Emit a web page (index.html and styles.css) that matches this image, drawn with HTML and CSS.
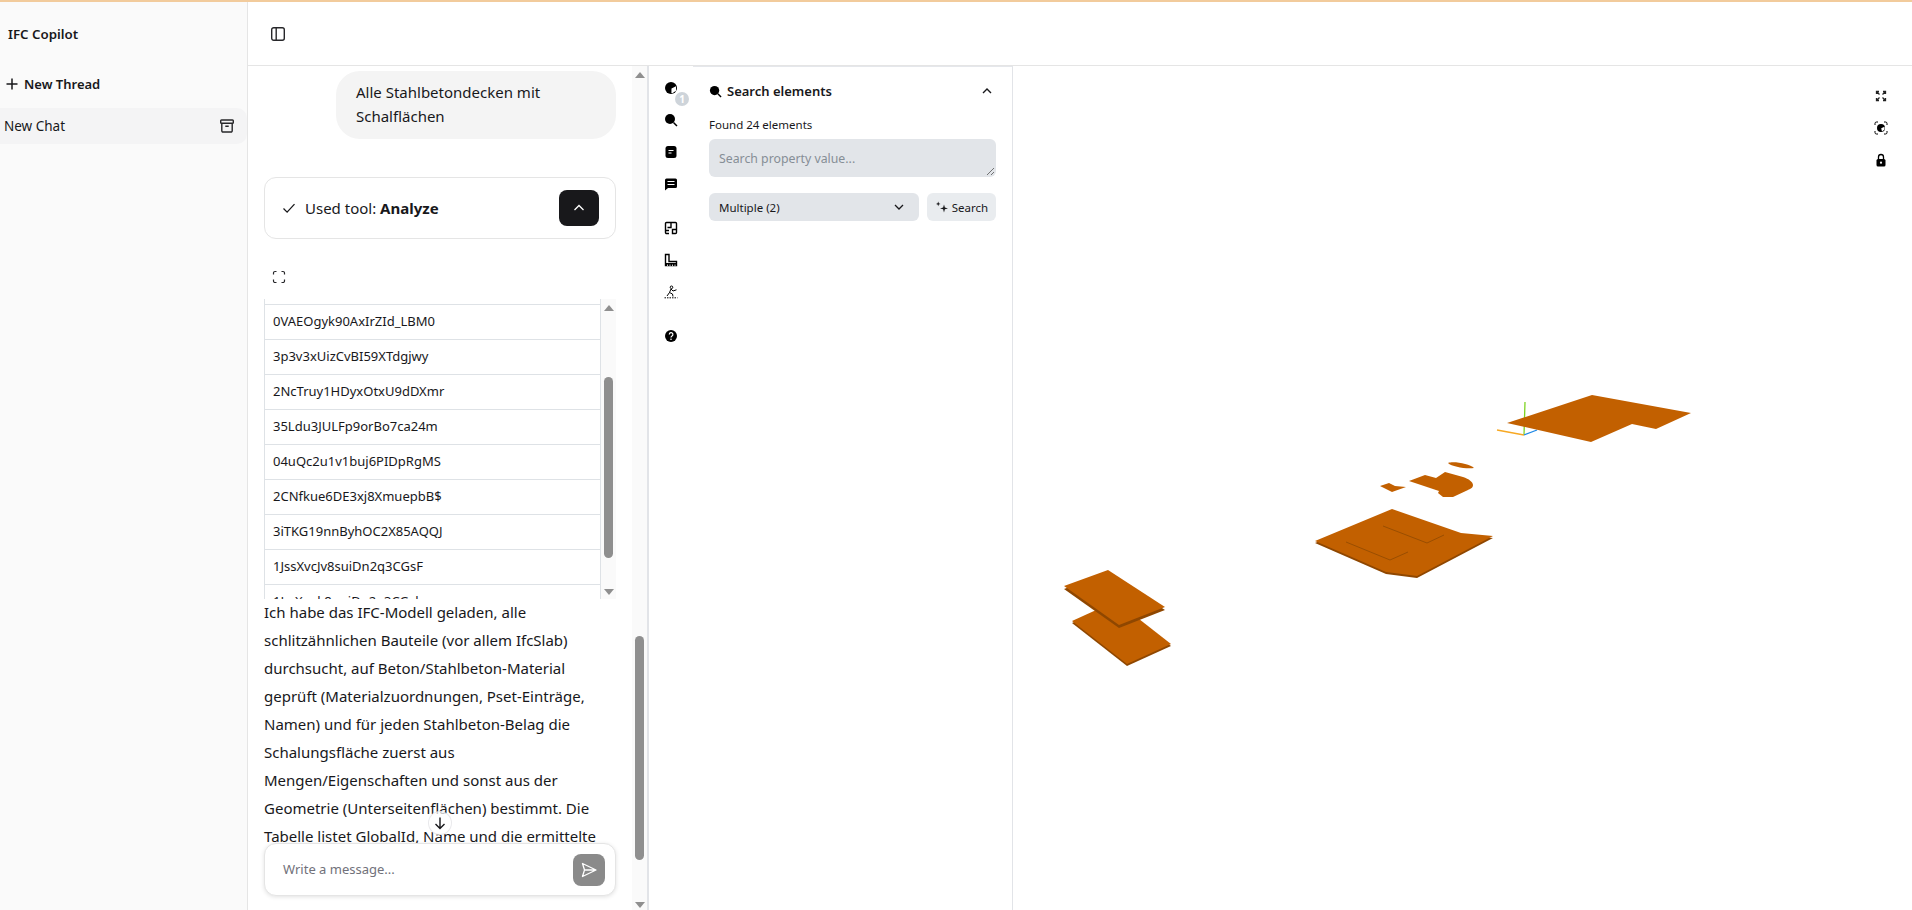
FILE: index.html
```html
<!DOCTYPE html>
<html lang="de">
<head>
<meta charset="utf-8">
<title>IFC Copilot</title>
<link rel="stylesheet" href="styles.css">
</head>
<body>
<div class="accent"></div>
<div class="app">
  <aside class="sidebar">
    <div class="brand">IFC Copilot</div>
    <div class="new-thread">
      <svg class="ico14" viewBox="0 0 14 14"><path d="M7 1.500v11M1.500 7h11" fill="none" stroke="#18181b" stroke-width="1.500"/></svg>
      <span>New Thread</span>
    </div>
    <div class="thread">
      <span>New Chat</span>
      <svg class="ico16" viewBox="0 0 16 16" fill="none" stroke="#27272a" stroke-width="1.400"><rect x="1.700" y="2" width="12.600" height="3.200" rx=".8"/><path d="M2.800 5.200v7.600a1.200 1.200 0 0 0 1.200 1.200h8a1.200 1.200 0 0 0 1.200-1.200V5.200M6.300 8.200h3.400"/></svg>
    </div>
  </aside>
  <div class="main">
    <header class="topbar">
      <svg class="ico16" viewBox="0 0 16 16" fill="none" stroke="#27272a" stroke-width="1.400"><rect x="1.700" y="1.700" width="12.600" height="12.600" rx="2"/><path d="M6.200 1.700v12.600"/></svg>
    </header>
    <div class="workspace">
      <section class="chat">
        <div class="chat-body">
          <div class="messages">
            <div class="bubble">Alle Stahlbetondecken mit Schalflächen</div>
            <div class="tool-card">
              <svg class="check" viewBox="0 0 14 14"><path d="M1.500 7.500l3.600 3.600 7.400-8" fill="none" stroke="#18181b" stroke-width="1.300"/></svg>
              <span class="tool-label">Used tool: <b>Analyze</b></span>
              <span class="tool-btn"><svg viewBox="0 0 12 12" width="12" height="12"><path d="M1.500 8L6 3.500 10.500 8" fill="none" stroke="#fff" stroke-width="1.300"/></svg></span>
            </div>
            <div class="table-tools">
              <svg viewBox="0 0 14 14" width="14" height="14" fill="none" stroke="#27272a" stroke-width="1.200"><path d="M1.500 4.500V3A1.500 1.500 0 0 1 3 1.500h1.500M9.500 1.500H11A1.500 1.500 0 0 1 12.500 3v1.500M12.500 9.500V11a1.500 1.500 0 0 1-1.500 1.500H9.500M4.500 12.500H3A1.500 1.500 0 0 1 1.500 11V9.500"/></svg>
            </div>
            <div class="table-wrap">
              <div class="table">
                <div class="row sliver"></div>
                <div class="row">0VAEOgyk90AxIrZId_LBM0</div>
                <div class="row">3p3v3xUizCvBI59XTdgjwy</div>
                <div class="row">2NcTruy1HDyxOtxU9dDXmr</div>
                <div class="row">35Ldu3JULFp9orBo7ca24m</div>
                <div class="row">04uQc2u1v1buj6PIDpRgMS</div>
                <div class="row">2CNfkue6DE3xj8XmuepbB$</div>
                <div class="row">3iTKG19nnByhOC2X85AQQJ</div>
                <div class="row">1JssXvcJv8suiDn2q3CGsF</div>
                <div class="row">1LoXxqk8uuiDn2q3CGsl</div>
              </div>
              <div class="sb sb-inner">
                <i class="arrow up"></i>
                <i class="thumb thumb-inner"></i>
                <i class="spring"></i>
                <i class="arrow down"></i>
              </div>
            </div>
            <p class="answer">Ich habe das IFC-Modell geladen, alle schlitzähnlichen Bauteile (vor allem IfcSlab) durchsucht, auf Beton/Stahlbeton-Material geprüft (Materialzuordnungen, Pset-Einträge, Namen) und für jeden Stahlbeton-Belag die Schalungsfläche zuerst aus Mengen/Eigenschaften und sonst aus der Geometrie (Unterseitenflächen) bestimmt. Die Tabelle listet GlobalId, Name und die ermittelte Schalungsfläche.</p>
            <span class="to-bottom"><svg viewBox="0 0 14 14" width="14" height="14"><path d="M7 1.500v11M2.500 8L7 12.500 11.500 8" fill="none" stroke="#18181b" stroke-width="1.400"/></svg></span>
          </div>
          <div class="composer">
            <span class="placeholder">Write a message...</span>
            <span class="send"><svg viewBox="0 0 18 18" width="18" height="18"><path d="M2.500 2.500L16 9 2.500 15.500 4.500 9zM4.500 9H16" fill="none" stroke="#fff" stroke-width="1.300" stroke-linejoin="round"/></svg></span>
          </div>
        </div>
        <div class="sb sb-outer">
          <i class="arrow up"></i>
          <i class="thumb thumb-outer"></i>
          <i class="spring"></i>
          <i class="arrow down"></i>
        </div>
      </section>

      <nav class="rail">
        <div class="rail-group">
          <span class="rail-item">
            <svg viewBox="0 0 14 14" width="14" height="14"><circle cx="7" cy="7" r="6" fill="#000"/><path d="M7.500 7.500l4.500-2.300v4.500l-3.600 2.600-1-.2z" fill="#fff"/></svg>
            <span class="badge">1</span>
          </span>
          <span class="rail-item"><svg viewBox="0 0 14 14" width="14" height="14"><circle cx="6" cy="6" r="5" fill="#000"/><path d="M9.500 9.500l3.500 3.500" stroke="#000" stroke-width="1.500"/></svg></span>
          <span class="rail-item"><svg viewBox="0 0 14 14" width="14" height="14"><rect x="1.500" y="1" width="11" height="12" rx="2.500" fill="#000"/><path d="M4.500 5.500h5M4.500 8h3" stroke="#fff" stroke-width="1.200"/></svg></span>
          <span class="rail-item"><svg viewBox="0 0 14 14" width="14" height="14"><path d="M2.500 1.500h9a1.500 1.500 0 0 1 1.500 1.500v6.500A1.500 1.500 0 0 1 11.500 11H4l-3 2.500V3a1.500 1.500 0 0 1 1.500-1.500z" fill="#000"/><path d="M3.500 4.500h7M3.500 7.500h7" stroke="#fff" stroke-width="1.200"/></svg></span>
        </div>
        <div class="rail-group">
          <span class="rail-item"><svg viewBox="0 0 14 14" width="14" height="14" fill="none" stroke="#000" stroke-width="1.400"><path d="M5 12.500H2.500a1 1 0 0 1-1-1v-9a1 1 0 0 1 1-1h9a1 1 0 0 1 1 1v9a1 1 0 0 1-1 1H8.500V8.500h4M7 1.500v5H3.500M1.500 9.500H5"/></svg></span>
          <span class="rail-item"><svg viewBox="0 0 14 14" width="14" height="14"><path d="M1.500 1.500h3.500v7h7.500v4h-11z" fill="none" stroke="#000" stroke-width="1.400"/><path d="M1 10h12v3H1z" fill="#000"/><path d="M3.500 13v-1.500M6 13v-1.500M8.500 13v-1.500M11 13v-1.500" stroke="#fff" stroke-width=".8"/></svg></span>
          <span class="rail-item"><svg viewBox="0 0 14 14" width="14" height="14" fill="none" stroke="#000" stroke-width="1"><circle cx="7.500" cy="2.300" r="1.300"/><path d="M7 4L5.500 7.500l3 1.500L9 11.500M7 4l2 2 3.500-1.200M5.500 7.500L3 11"/><path d="M.5 12.800h13" stroke-dasharray="1.500 1"/></svg></span>
        </div>
        <div class="rail-group">
          <span class="rail-item"><svg viewBox="0 0 14 14" width="14" height="14"><circle cx="7" cy="7" r="6" fill="#000"/><path d="M5.300 5.500a1.800 1.800 0 1 1 2.700 1.500c-.6.400-1 .7-1 1.500" fill="none" stroke="#fff" stroke-width="1.200"/><circle cx="7" cy="10.300" r=".8" fill="#fff"/></svg></span>
        </div>
      </nav>

      <section class="panel">
        <div class="panel-head">
          <svg viewBox="0 0 14 14" width="13" height="13"><circle cx="6" cy="6" r="5" fill="#000"/><path d="M9.500 9.500l3.500 3.500" stroke="#000" stroke-width="1.500"/></svg>
          <span class="panel-title">Search elements</span>
          <svg class="panel-chev" viewBox="0 0 12 12" width="12" height="12"><path d="M2 8l4-4 4 4" fill="none" stroke="#18181b" stroke-width="1.400"/></svg>
        </div>
        <div class="found">Found 24 elements</div>
        <div class="textarea">Search property value...
          <svg class="grip" viewBox="0 0 8 8" width="8" height="8"><path d="M1 8l7-7M5 8l3-3" stroke="#555" stroke-width=".8"/></svg>
        </div>
        <div class="controls">
          <div class="select"><span>Multiple (2)</span><svg viewBox="0 0 12 12" width="12" height="12"><path d="M2 4l4 4 4-4" fill="none" stroke="#18181b" stroke-width="1.300"/></svg></div>
          <div class="search-btn">
            <svg viewBox="0 0 14 14" width="14" height="14"><path d="M9 4.500l.9 3 3.100.9-3.100.9-.9 3.200-.9-3.200-3.100-.9 3.100-.9zM3.200 1.500l.6 1.800 1.700.6-1.700.6-.6 1.800-.6-1.800L1 3.900l1.600-.6z" fill="#18181b"/></svg>
            <span>Search</span>
          </div>
        </div>
      </section>

      <section class="viewer">
        <svg class="scene" viewBox="1013 66 899 844" width="899" height="844">
          <g class="axes" fill="none" stroke-width="1.300">
            <path d="M1524 435L1525 402" stroke="#7ed321"/>
            <path d="M1524 435L1497 430" stroke="#f7a823"/>
            <path d="M1524 435L1537 430" stroke="#1e88e5"/>
          </g>
          <path class="edge" d="M1072 623L1116 603L1171 646L1127 666Z"/>
          <path class="slab" d="M1072 621L1116 601L1171 644L1127 664Z"/>
          <path class="edge" d="M1064 589L1108 573L1165 610L1119 628Z"/>
          <path class="slab" d="M1064 586L1108 570L1165 607L1119 625Z"/>
          <path class="edge" d="M1315 543L1392 511L1461 535L1493 538L1417 578L1386 574Z"/>
          <path class="slab" d="M1315 541L1392 509L1461 533L1493 536L1417 576L1386 572Z"/>
          <path class="slab" d="M1507 423L1592 395L1691 413L1656 429L1632 424L1591 442Z"/>
          <path class="slab" d="M1448 463c6-2 22 1 26 5-8 1-22-1-26-5z"/>
          <path class="slab" d="M1409 481l16-6 11 3 9-6 18 5c6 2 10 5 10 8s-3 4-5 5l-15 7h-10l-5-4 1-2z"/>
          <path class="slab" d="M1380 486l9-3 6 3 11 1-14 5z"/>
          <path class="seam" d="M1383 526l44 17 17-8"/>
          <path class="seam" d="M1346 542l44 18 18-8"/>
        </svg>
        <div class="viewer-tools">
          <svg viewBox="0 0 14 14" width="14" height="14" fill="none" stroke="#222" stroke-width="1.300"><path d="M5.500 5.500L2.500 2.500M2.500 5V2.500H5M8.500 5.500L11.500 2.500M9 2.500h2.500V5M5.500 8.500L2.500 11.500M2.500 9v2.500H5M8.500 8.500L11.500 11.500M11.500 9v2.500H9"/></svg>
          <svg viewBox="0 0 14 14" width="14" height="14"><path d="M1 4V2.500A1.500 1.500 0 0 1 2.500 1H4M10 1h1.500A1.500 1.500 0 0 1 13 2.500V4M13 10v1.500a1.500 1.500 0 0 1-1.500 1.500H10M4 13H2.500A1.500 1.500 0 0 1 1 11.500V10" fill="none" stroke="#000" stroke-width="1"/><circle cx="7" cy="7" r="4" fill="#000"/><path d="M7.200 7.200l3.300-1.500v2.800L8 10.500z" fill="#fff"/></svg>
          <svg viewBox="0 0 14 14" width="14" height="14"><rect x="2.500" y="6" width="9" height="7.500" rx="1.500" fill="#000"/><path d="M4.500 6V4a2.500 2.500 0 0 1 5 0v2" fill="none" stroke="#000" stroke-width="1.300"/><circle cx="7" cy="9.700" r="1.100" fill="#fff"/></svg>
        </div>
      </section>
    </div>
  </div>
</div>
</body>
</html>
```

FILE: styles.css
```css
* { box-sizing: border-box; }
html, body { margin: 0; height: 100%; overflow: hidden; }
body {
  font-family: "Noto Sans", "Open Sans", sans-serif;
  color: #18181b;
  background: #fff;
  display: flex;
  flex-direction: column;
  height: 910px;
}
.accent { height: 2px; background: #f2cb9c; flex: none; }
.app { flex: 1; display: flex; min-height: 0; }

/* sidebar */
.sidebar {
  width: 248px;
  flex: none;
  background: #fafafa;
  border-right: 1px solid #e5e5e5;
}
.brand { height: 64px; padding: 0 0 0 8px; display: flex; align-items: center; font-size: 13.3px; font-weight: 600; }
.new-thread { margin-top: 1px; height: 34px; padding-left: 5px; display: flex; align-items: center; gap: 5px; font-size: 13px; font-weight: 600; }
.thread {
  margin-top: 7px;
  height: 36px;
  padding: 0 12px 0 4px;
  background: #f4f4f5;
  border-radius: 0 10px 10px 0;
  display: flex;
  align-items: center;
  justify-content: space-between;
  font-size: 13.500px;
}
.ico14 { width: 14px; height: 14px; flex: none; }
.ico16 { width: 16px; height: 16px; flex: none; }

/* main */
.main { flex: 1; min-width: 0; display: flex; flex-direction: column; }
.topbar {
  height: 64px;
  flex: none;
  padding-left: 22px;
  display: flex;
  align-items: center;
  border-bottom: 1px solid #e5e5e5;
}
.workspace { flex: 1; min-height: 0; display: flex; }

/* chat */
.chat { width: 399px; flex: none; display: flex; min-height: 0; }
.chat-body { width: 384px; flex: none; display: flex; flex-direction: column; padding-bottom: 14px; }
.messages { position: relative; flex: 1; min-height: 0; overflow: hidden; padding: 5px 16px 0; }
.bubble {
  width: 280px;
  margin-left: auto;
  padding: 9px 20px 11px;
  background: #f4f4f4;
  border-radius: 24px;
  font-size: 15px;
  line-height: 24px;
  min-height: 68px;
}
.tool-card {
  margin-top: 38px;
  height: 62px;
  border: 1px solid #e5e5e5;
  border-radius: 12px;
  display: flex;
  align-items: center;
  padding: 0 16px 0 17px;
  font-size: 15px;
}
.check { width: 14px; height: 14px; flex: none; margin-right: 9px; }
.tool-label { flex: 1; }
.tool-btn {
  width: 40px;
  height: 36px;
  background: #18181b;
  border-radius: 8px;
  display: flex;
  align-items: center;
  justify-content: center;
}
.table-tools { height: 60px; padding: 31px 0 0 8px; }
.table-tools svg { display: block; }
.table-wrap { height: 300px; display: flex; overflow: hidden; }
.table { flex: 1; min-width: 0; border-left: 1px solid #dee2e6; border-right: 1px solid #dee2e6; }
.row {
  height: 35px;
  padding: 0 0 2px 8px;
  border-bottom: 1px solid #dee2e6;
  display: flex;
  align-items: center;
  font-size: 13px;
  white-space: nowrap;
}
.row.sliver { height: 6px; padding: 0; }

/* faux classic scrollbars */
.sb { display: flex; flex-direction: column; align-items: center; flex: none; background: #fafafa; }
.sb i { display: block; flex: none; }
.spring { flex: 1 !important; }
.arrow { width: 0; height: 0; border-left: 5px solid transparent; border-right: 5px solid transparent; }
.arrow.up { border-bottom: 6px solid #8f8f8f; }
.arrow.down { border-top: 6px solid #8f8f8f; }
.thumb { width: 9px; border-radius: 5px; background: #8f8f8f; }
.sb-inner { width: 15px; padding: 6px 0 4px; }
.thumb-inner { height: 181px; margin-top: 66px; }
.sb-outer { width: 15px; padding: 6px 0 2px; }
.thumb-outer { height: 224px; margin-top: 558px; }

.answer { margin: -1px 0 0; font-size: 15px; line-height: 28px; }
.to-bottom {
  position: absolute;
  left: 180px;
  bottom: 8px;
  width: 24px;
  height: 24px;
  border-radius: 50%;
  border: 1px solid rgba(228, 228, 231, .8);
  background: rgba(255, 255, 255, .75);
  display: flex;
  align-items: center;
  justify-content: center;
}
.composer {
  flex: none;
  margin: 0 16px;
  height: 53px;
  border: 1px solid #e5e5e5;
  border-radius: 12px;
  box-shadow: 0 1px 4px rgba(0, 0, 0, .12);
  background: #fff;
  display: flex;
  align-items: center;
  justify-content: space-between;
  padding: 0 10px 0 18px;
}
.placeholder { font-size: 13px; color: #71717a; margin-top: -2px; }
.send {
  width: 32px;
  height: 32px;
  border-radius: 8px;
  background: #8a8a8a;
  display: flex;
  align-items: center;
  justify-content: center;
}

/* tool rail */
.rail {
  width: 46px;
  flex: none;
  border-left: 2px solid #e2e4e8;
  display: flex;
  flex-direction: column;
  gap: 12px;
  padding-top: 6px;
}
.rail-item { position: relative; display: flex; height: 32px; align-items: center; justify-content: center; }
.rail-group { display: flex; flex-direction: column; }
.badge {
  position: absolute;
  left: 26px;
  top: 20px;
  width: 14px;
  height: 14px;
  border-radius: 50%;
  background: #ced4da;
  color: #fff;
  font-size: 10px;
  font-weight: 700;
  display: flex;
  align-items: center;
  justify-content: center;
}

/* search panel */
.panel {
  width: 320px;
  flex: none;
  border-top: 1px solid #e5e7eb;
  border-right: 1px solid #e2e4e8;
  padding: 0 16px;
}
.panel-head { height: 48px; display: flex; align-items: center; gap: 5px; }
.panel-title { flex: 1; font-size: 13px; font-weight: 600; }
.panel-chev { margin-right: 3px; }
.found { font-size: 11.500px; line-height: 16px; margin-top: 2px; }
.textarea {
  position: relative;
  margin-top: 6px;
  height: 38px;
  padding: 0 10px;
  background: #e2e5e9;
  border-radius: 6px;
  display: flex;
  align-items: center;
  font-size: 12.300px;
  color: #868e96;
}
.grip { position: absolute; right: 2px; bottom: 2px; }
.controls { margin-top: 16px; display: flex; gap: 8px; }
.select {
  flex: 1;
  height: 28px;
  padding: 0 14px 0 10px;
  background: #e2e5e9;
  border-radius: 6px;
  display: flex;
  align-items: center;
  justify-content: space-between;
  font-size: 11.500px;
}
.search-btn {
  width: 69px;
  height: 28px;
  background: #e9ecef;
  border-radius: 6px;
  display: flex;
  align-items: center;
  justify-content: center;
  gap: 3px;
  font-size: 11.500px;
}

/* viewer */
.viewer { position: relative; flex: 1; min-width: 0; overflow: hidden; background: #fff; }
.scene { display: block; }
.edge { fill: #8f4700; }
.slab { fill: #c26000; }
.seam { fill: none; stroke: #9a4e00; stroke-width: 1; }
.viewer-tools {
  position: absolute;
  top: 23px;
  right: 24px;
  display: flex;
  flex-direction: column;
  gap: 18px;
}
.viewer-tools svg { display: block; }
```
